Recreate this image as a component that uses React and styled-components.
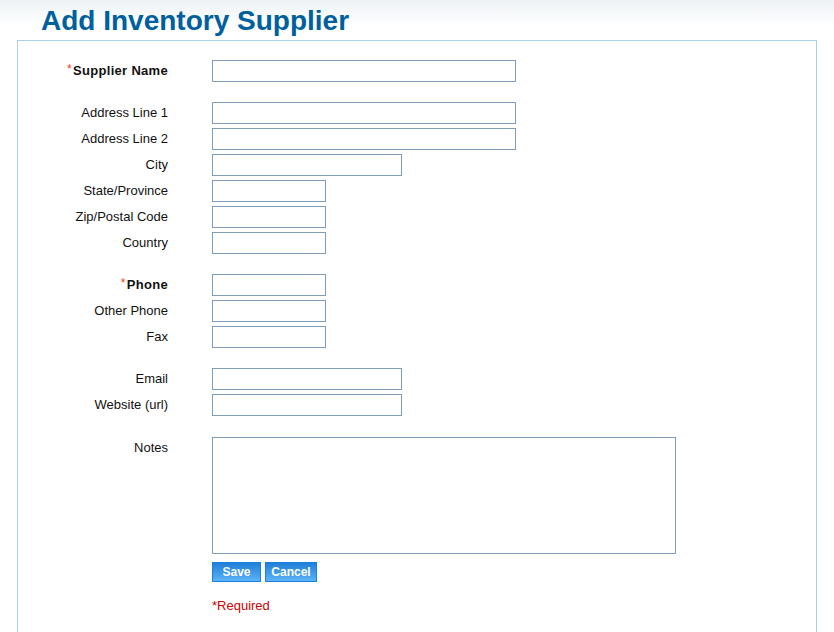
import React from "react";
import styled, { createGlobalStyle } from "styled-components";

const GlobalStyle = createGlobalStyle`
  body {
    margin: 0;
    background: #fff;
    font-family: "Liberation Sans", Arial, sans-serif;
  }
`;

const groups = [
  [{ label: "Supplier Name", size: "long", required: true }],
  [
    { label: "Address Line 1", size: "long" },
    { label: "Address Line 2", size: "long" },
    { label: "City", size: "medium" },
    { label: "State/Province", size: "short" },
    { label: "Zip/Postal Code", size: "short" },
    { label: "Country", size: "short" },
  ],
  [
    { label: "Phone", size: "short", required: true },
    { label: "Other Phone", size: "short" },
    { label: "Fax", size: "short" },
  ],
  [
    { label: "Email", size: "medium" },
    { label: "Website (url)", size: "medium" },
  ],
];

const widths = { long: 304, medium: 190, short: 114 };

const App = () => {
  return (
    <>
      <GlobalStyle />
      <S.Header>
        <S.Title>Add Inventory Supplier</S.Title>
      </S.Header>
      <S.Panel>
        {groups.map((group, i) => (
          <S.Group key={i}>
            {group.map((field) => (
              <S.Row key={field.label}>
                <S.Label $bold={field.required}>
                  {field.required && <S.Star>*</S.Star>}
                  {field.label}
                </S.Label>
                <S.Input type="text" $width={widths[field.size]} />
              </S.Row>
            ))}
          </S.Group>
        ))}
        <S.NotesRow>
          <S.Label>Notes</S.Label>
          <S.Field>
            <S.TextArea />
            <S.Buttons>
              <S.Button $width={49}>Save</S.Button>
              <S.Button $width={52}>Cancel</S.Button>
            </S.Buttons>
            <S.Required>*Required</S.Required>
          </S.Field>
        </S.NotesRow>
      </S.Panel>
    </>
  );
};

const Row = styled.div`
  display: grid;
  grid-template-columns: 150px 304px;
  column-gap: 44px;
  align-items: start;
`;

const S = {
  Header: styled.div`
    height: 40px;
    background: linear-gradient(#eef2f6 0px, #ffffff 26px);
    box-sizing: border-box;
    padding: 5px 0 0 41px;
  `,
  Title: styled.h1`
    margin: 0;
    font-size: 28px;
    line-height: 32px;
    font-weight: bold;
    color: #00609e;
  `,
  Panel: styled.div`
    margin-left: 17px;
    width: 800px;
    min-height: 592px;
    box-sizing: border-box;
    border: 1px solid #a9d3ea;
    border-bottom: none;
    padding: 19px 0 20px 0;
    display: flex;
    flex-direction: column;
    gap: 20px;
  `,
  Group: styled.div`
    display: flex;
    flex-direction: column;
    gap: 4px;
  `,
  Row,
  NotesRow: styled(Row)`
    margin-top: 1px;
  `,
  Label: styled.label`
    height: 22px;
    text-align: right;
    font-size: 13px;
    line-height: 22px;
    color: #111;
    font-weight: ${(p) => (p.$bold ? "bold" : "normal")};
    letter-spacing: ${(p) => (p.$bold ? "0.3px" : "0")};
  `,
  Star: styled.span`
    display: inline-block;
    line-height: 0;
    color: #f03a1a;
    font-weight: normal;
    font-size: 12px;
    transform: translateY(-2px);
    margin-right: 1px;
  `,
  Input: styled.input`
    width: ${(p) => p.$width}px;
    height: 22px;
    box-sizing: border-box;
    border: 1px solid #7f9db9;
    margin: 0;
    padding: 1px 3px;
    font-size: 13px;
    font-family: inherit;
  `,
  Field: styled.div`
    display: flex;
    flex-direction: column;
    align-items: flex-start;
  `,
  TextArea: styled.textarea`
    width: 464px;
    height: 117px;
    box-sizing: border-box;
    border: 1px solid #7f9db9;
    margin: 0;
    resize: none;
    font-family: inherit;
  `,
  Buttons: styled.div`
    display: flex;
    gap: 4px;
    margin-top: 8px;
  `,
  Button: styled.button`
    width: ${(p) => p.$width}px;
    height: 20px;
    padding: 0;
    box-sizing: border-box;
    border: 1px solid #1c7fd9;
    background: linear-gradient(#1f7fd8, #5cb3f7);
    color: #fff;
    font-family: inherit;
    font-size: 12px;
    font-weight: bold;
    line-height: 18px;
    cursor: pointer;
  `,
  Required: styled.div`
    margin-top: 16px;
    color: #cc0000;
    font-size: 13px;
    line-height: 16px;
  `,
};

export default App;
